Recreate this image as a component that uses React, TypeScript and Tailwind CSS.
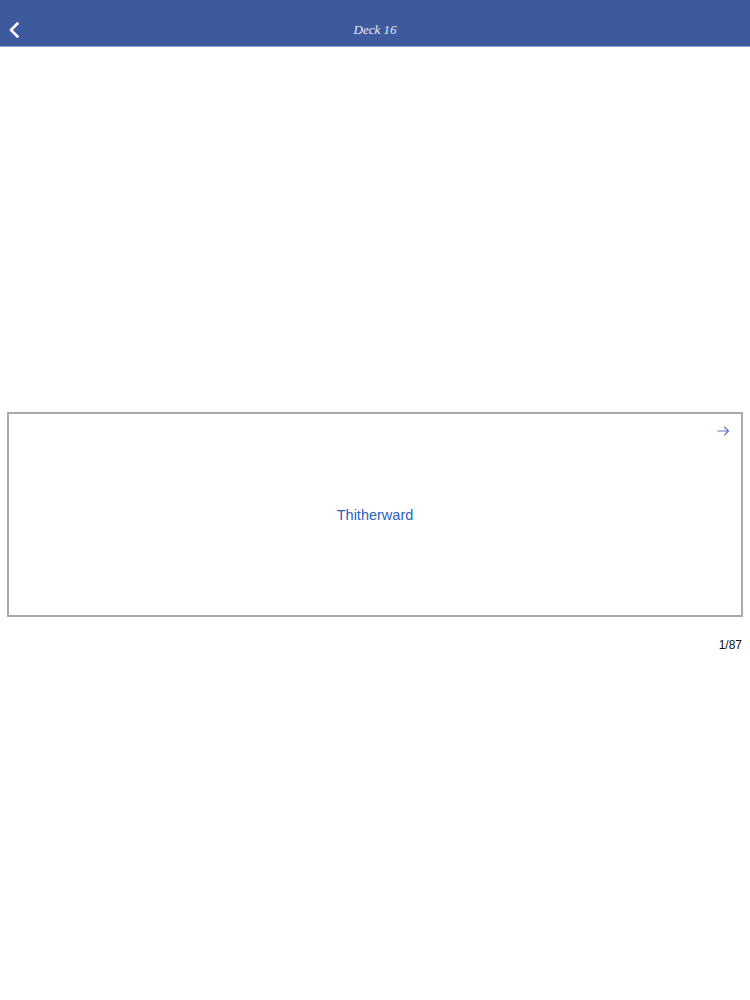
export default function App() {
  return (
    <div className="min-h-[1000px] w-[750px] bg-white" style={{ fontFamily: '"Liberation Sans", Arial, sans-serif' }}>
      {/* barra superior */}
      <header className="relative flex h-[47px] items-center justify-center border-b border-[#8ea0cf] bg-[#3d5a9e]">
        <button className="absolute left-[8px] top-[22px] text-white" aria-label="Back">
          <svg width="12" height="16" viewBox="0 0 12 16" fill="none">
            <polyline points="9.5,1.5 3,8 9.5,14.5" stroke="currentColor" strokeWidth="2.6" strokeLinecap="round" strokeLinejoin="round" />
          </svg>
        </button>
        <h1
          className="pt-[14px] text-[13px] italic text-[#e6ebf7]"
          style={{ fontFamily: '"Liberation Serif", "Times New Roman", serif' }}
        >
          Deck 16
        </h1>
      </header>

      <main className="px-[7px] pt-[365px]">
        {/* tarjeta */}
        <div className="relative flex h-[205px] items-center justify-center border-2 border-[#a9a9a9]">
          <svg className="absolute right-[11px] top-[12px]" width="13" height="10" viewBox="0 0 13 10" fill="none">
            <path d="M1 5H11.5M7.5 1L11.5 5L7.5 9" stroke="#5b74c9" strokeWidth="1.1" strokeLinecap="round" strokeLinejoin="round" />
          </svg>
          <span className="pt-[2px] text-[14.5px] text-[#2d5fbf]">Thitherward</span>
        </div>
        <p className="mt-[19px] pr-[1px] text-right text-[12px] text-[#111]">1/87</p>
      </main>
    </div>
  );
}
